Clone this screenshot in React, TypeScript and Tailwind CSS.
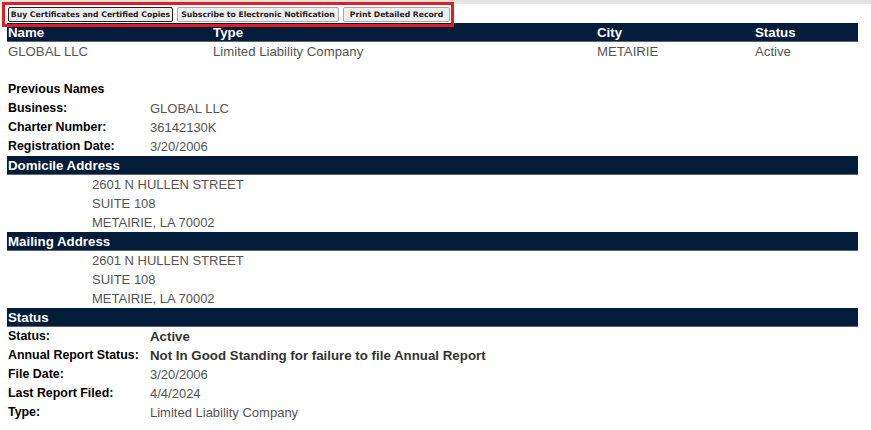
const font = "font-['Liberation_Sans',Arial,sans-serif]";

function Bar({ children }: { children: React.ReactNode }) {
  return (
    <div className="flex h-[19px] items-center bg-[#021c3a] pl-px text-[13.3px] font-bold text-white shadow-[inset_0_-1px_0_#5a6678]">
      {children}
    </div>
  );
}

function Row({ label, value, bold }: { label: string; value: string; bold?: boolean }) {
  return (
    <div className="flex h-[19px] items-center">
      <div className="w-[143px] pl-px text-[12.4px] font-bold text-black">{label}</div>
      <div className={bold ? "text-[13.3px] font-bold text-[#333]" : "text-[13px] text-[#555]"}>{value}</div>
    </div>
  );
}

function Address({ lines }: { lines: string[] }) {
  return (
    <div className="pl-[85px] text-[13px] text-[#555]">
      {lines.map((l) => (
        <div key={l} className="flex h-[19px] items-center">
          {l}
        </div>
      ))}
    </div>
  );
}

const buttonCls =
  "h-[15px] whitespace-nowrap rounded-[2px] border bg-[#efefef] px-0 font-['DejaVu_Sans',Verdana,sans-serif] text-[7.7px] font-bold leading-none text-[#222]";

export default function App() {
  const address = ["2601 N HULLEN STREET", "SUITE 108", "METAIRIE, LA 70002"];

  return (
    <div className={`relative min-h-[430px] w-[871px] bg-white ${font}`}>
      {/* top strip */}
      <div className="h-[4px] bg-[#e4e4e4]" />

      {/* action buttons */}
      <div className="flex h-[19px] items-start gap-[4px] pl-[8px] pt-[3px]">
        <button className={`${buttonCls} w-[165px] border-[#222]`}>Buy Certificates and Certified Copies</button>
        <button className={`${buttonCls} w-[162px] border-[#a9a9a9]`}>Subscribe to Electronic Notification</button>
        <button className={`${buttonCls} w-[107px] border-[#a9a9a9]`}>Print Detailed Record</button>
      </div>

      {/* red highlight */}
      <div className="absolute left-[2px] top-[2px] h-[25px] w-[452px] border-[3px] border-[#e11d22]" />

      <div className="ml-[7px] w-[851px]">
        <Bar>
          <div className="w-[205px]">Name</div>
          <div className="w-[384px]">Type</div>
          <div className="w-[158px]">City</div>
          <div>Status</div>
        </Bar>
        <div className="flex h-[19px] items-center pl-px text-[13.2px] text-[#555]">
          <div className="w-[205px]">GLOBAL LLC</div>
          <div className="w-[384px]">Limited Liability Company</div>
          <div className="w-[158px]">METAIRIE</div>
          <div>Active</div>
        </div>
        <div className="h-[19px]" />

        <div className="flex h-[19px] items-center pl-px text-[12.4px] font-bold text-black">Previous Names</div>
        <Row label="Business:" value="GLOBAL LLC" />
        <Row label="Charter Number:" value="36142130K" />
        <Row label="Registration Date:" value="3/20/2006" />

        <Bar>Domicile Address</Bar>
        <Address lines={address} />

        <Bar>Mailing Address</Bar>
        <Address lines={address} />

        <Bar>Status</Bar>
        <Row label="Status:" value="Active" bold />
        <Row label="Annual Report Status:" value="Not In Good Standing for failure to file Annual Report" bold />
        <Row label="File Date:" value="3/20/2006" />
        <Row label="Last Report Filed:" value="4/4/2024" />
        <Row label="Type:" value="Limited Liability Company" />
      </div>
    </div>
  );
}
